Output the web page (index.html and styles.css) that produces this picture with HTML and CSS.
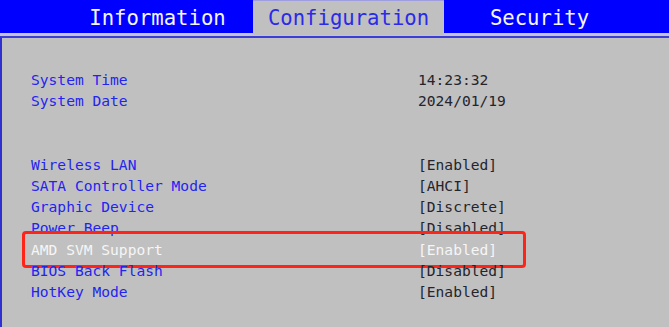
FILE: index.html
```html
<!DOCTYPE html>
<html>
<head>
<meta charset="utf-8">
<link rel="stylesheet" href="styles.css">
</head>
<body>
<div class="screen">
  <div class="tabs">
    <div class="tab">Information</div>
    <div class="tab active">Configuration</div>
    <div class="tab">Security</div>
  </div>
  <div class="gap"></div>
  <div class="panel">
    <div class="rows">
      <div class="row"><span class="label">System Time</span><span class="value">14:23:32</span></div>
      <div class="row"><span class="label">System Date</span><span class="value">2024/01/19</span></div>
      <div class="row"></div>
      <div class="row"></div>
      <div class="row"><span class="label">Wireless LAN</span><span class="value">[Enabled]</span></div>
      <div class="row"><span class="label">SATA Controller Mode</span><span class="value">[AHCI]</span></div>
      <div class="row"><span class="label">Graphic Device</span><span class="value">[Discrete]</span></div>
      <div class="row"><span class="label">Power Beep</span><span class="value">[Disabled]</span></div>
      <div class="row selected"><span class="label">AMD SVM Support</span><span class="value">[Enabled]</span><div class="mark"></div></div>
      <div class="row"><span class="label">BIOS Back Flash</span><span class="value">[Disabled]</span></div>
      <div class="row"><span class="label">HotKey Mode</span><span class="value">[Enabled]</span></div>
    </div>
  </div>
</div>
</body>
</html>
```
FILE: styles.css
```css
html, body {
  margin: 0;
  padding: 0;
  background: #c0c0c0;
}
.screen {
  width: 669px;
  height: 327px;
  overflow: hidden;
  background: #c0c0c0;
  font-family: "DejaVu Sans Mono", "Liberation Mono", monospace;
}
.tabs {
  display: flex;
  height: 33px;
  background: #0000ff;
  padding-left: 62px;
}
.tab {
  width: 191px;
  text-align: center;
  color: #f4f4ff;
  font-size: 20.6px;
  line-height: 37px;
  height: 33px;
  overflow: visible;
}
.tab.active {
  background: #c0c0c0;
  color: #2a2ae8;
  border-top: 1px solid #9d9de0;
  height: 35px;
  line-height: 35px;
  box-sizing: border-box;
  position: relative;
}
.gap {
  height: 3px;
  background: #c4c4c4;
}
.panel {
  border-top: 2px solid #3c3cd8;
  border-left: 2px solid #3030d0;
  height: 300px;
  box-sizing: border-box;
  padding: 31px 0 0 29px;
}
.rows {
  display: flex;
  flex-direction: column;
}
.row {
  position: relative;
  display: flex;
  height: 21.2px;
  line-height: 21.2px;
  font-size: 14.6px;
}
.label {
  width: 387px;
  color: #2424f0;
}
.value {
  color: #24242c;
}
.row.selected .label,
.row.selected .value {
  color: #f6f6f6;
}
.mark {
  position: absolute;
  left: -9px;
  top: -8px;
  width: 504px;
  height: 37px;
  box-sizing: border-box;
  border: 3.5px solid #ff2418;
  border-radius: 4px;
}
```
